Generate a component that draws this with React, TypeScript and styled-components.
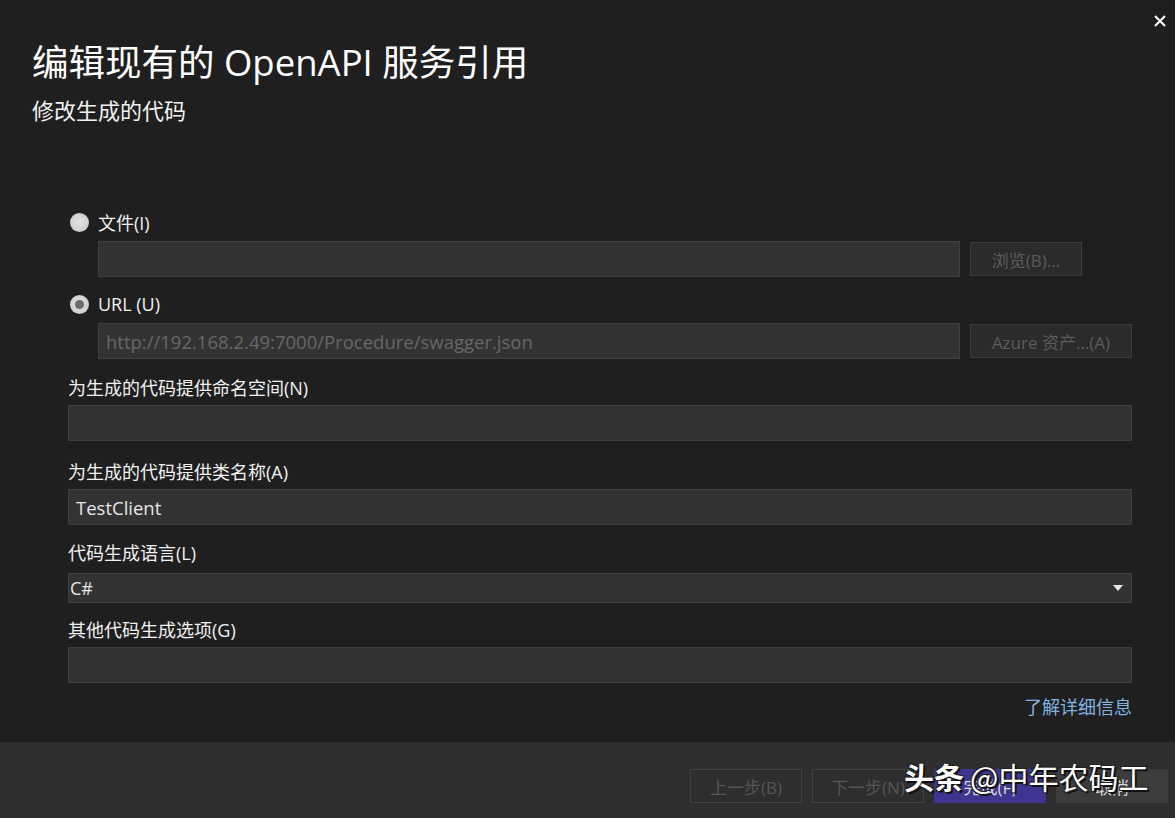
import React from 'react';
import styled, { createGlobalStyle } from 'styled-components';

const GlobalStyle = createGlobalStyle`
  html, body {
    margin: 0;
    padding: 0;
    background: #1f1f1f;
  }
  body {
    font-family: "Open Sans", "Noto Sans CJK SC", sans-serif;
    color: #f1f1f1;
  }
  * {
    box-sizing: border-box;
  }
`;

const Dialog = styled.div`
  position: relative;
  width: 1175px;
  height: 818px;
  display: flex;
  flex-direction: column;
  background: #1f1f1f;
  overflow: hidden;
`;

const Header = styled.div`
  display: flex;
  justify-content: space-between;
  align-items: flex-start;
  padding: 40px 0 0 32px;
`;

const Heading = styled.div`
  display: flex;
  flex-direction: column;
`;

const Title = styled.h1`
  margin: 0;
  font-size: 36.5px;
  line-height: 44px;
  font-weight: 400;
  color: #ffffff;
`;

const Subtitle = styled.h2`
  margin: 12px 0 0;
  font-size: 22px;
  line-height: 28px;
  font-weight: 400;
  color: #f1f1f1;
`;

const CloseButton = styled.button`
  margin-top: -30px;
  width: 22px;
  height: 22px;
  padding: 0;
  border: none;
  background: transparent;
  color: #ffffff;
  display: flex;
  align-items: center;
  justify-content: flex-start;
`;

const Body = styled.div`
  flex: 1;
  display: flex;
  flex-direction: column;
  padding: 84px 43px 0 68px;
`;

const RadioRow = styled.label<{ $gap: number }>`
  display: flex;
  align-items: center;
  gap: 9px;
  height: 28px;
  margin-top: ${p => p.$gap}px;
  padding-left: 2px;
  font-size: 18px;
  color: #f1f1f1;
`;

const RadioDot = styled.span<{ $checked?: boolean }>`
  width: 19px;
  height: 19px;
  border-radius: 50%;
  background: radial-gradient(circle at 50% 45%, #e2e2e2 0%, #cfcfcf 70%, #a9a9a9 100%);
  display: flex;
  align-items: center;
  justify-content: center;
  &::after {
    content: '';
    display: ${p => (p.$checked ? 'block' : 'none')};
    width: 9px;
    height: 9px;
    border-radius: 50%;
    background: #6b6b6b;
  }
`;

const SourceRow = styled.div`
  display: grid;
  grid-template-columns: 862px auto;
  justify-content: start;
  gap: 10px;
  margin-top: 5px;
  padding-left: 30px;
`;

const TextBox = styled.div<{ $muted?: boolean }>`
  height: 36px;
  min-width: 0;
  background: #333333;
  border: 1px solid #3f3f3f;
  display: flex;
  align-items: center;
  padding: 0 7px;
  font-size: 18.5px;
  color: ${p => (p.$muted ? '#676767' : '#e6e6e6')};
  white-space: nowrap;
  overflow: hidden;
`;

const SideButton = styled.button<{ $width: number }>`
  width: ${p => p.$width}px;
  height: 34px;
  margin-top: 1px;
  background: #2b2b2b;
  border: 1px solid #3b3b3b;
  color: #5c5c5c;
  font-family: inherit;
  font-size: 17px;
  padding: 0;
`;

const Field = styled.div<{ $gap: number }>`
  display: flex;
  flex-direction: column;
  margin-top: ${p => p.$gap}px;
`;

const Label = styled.div`
  height: 28px;
  line-height: 28px;
  margin-bottom: 3px;
  font-size: 18px;
  color: #f1f1f1;
`;

const Select = styled.div`
  height: 30px;
  margin-top: 3px;
  background: #333333;
  border: 1px solid #3f3f3f;
  display: flex;
  align-items: center;
  justify-content: space-between;
  padding: 0 8px 0 1px;
  font-size: 18px;
  color: #e6e6e6;
`;

const LinkRow = styled.div`
  display: flex;
  justify-content: flex-end;
  margin-top: 12px;
`;

const Link = styled.a`
  font-size: 18px;
  line-height: 24px;
  color: #83b3e0;
  text-decoration: none;
`;

const Footer = styled.div`
  height: 76px;
  background: #2e2e2e;
  border-top: 1px solid #272727;
  display: flex;
  justify-content: flex-end;
  padding: 26px 7px 0 0;
  gap: 10px;
`;

const FooterButton = styled.button<{ $primary?: boolean; $enabled?: boolean }>`
  width: 112px;
  height: 34px;
  padding: 0;
  font-family: inherit;
  font-size: 17px;
  background: ${p => (p.$primary ? '#3f3591' : p.$enabled ? '#3c3c3c' : '#2e2e2e')};
  border: 1px solid ${p => (p.$primary ? '#3f3591' : p.$enabled ? '#3c3c3c' : '#414141')};
  color: ${p => (p.$primary || p.$enabled ? '#d8d8d8' : '#555555')};
`;

const Watermark = styled.div`
  position: absolute;
  left: 904px;
  top: 756px;
  font-family: "Noto Sans CJK SC", sans-serif;
  font-size: 30px;
  line-height: 40px;
  color: #ffffff;
  white-space: nowrap;
  text-shadow: 2px 2px 0 #111, -1px -1px 0 #222, 1px -1px 0 #222, -1px 1px 0 #222;
  pointer-events: none;
`;

const Strong = styled.span`
  font-weight: 700;
  margin-right: 6px;
`;

const CloseIcon = () => (
  <svg width="14" height="14" viewBox="0 0 14 14">
    <path d="M2 2 L12 12 M12 2 L2 12" stroke="#ffffff" strokeWidth="2" />
  </svg>
);

const DropArrow = () => (
  <svg width="10" height="6" viewBox="0 0 10 6">
    <path d="M0 0 H10 L5 6 Z" fill="#e6e6e6" />
  </svg>
);

export default function App() {
  return (
    <>
      <GlobalStyle />
      <Dialog>
        <Header>
          <Heading>
            <Title>编辑现有的 OpenAPI 服务引用</Title>
            <Subtitle>修改生成的代码</Subtitle>
          </Heading>
          <CloseButton aria-label="关闭">
            <CloseIcon />
          </CloseButton>
        </Header>

        <Body>
          <RadioRow $gap={0}>
            <RadioDot />
            文件(I)
          </RadioRow>
          <SourceRow>
            <TextBox />
            <SideButton $width={112}>浏览(B)...</SideButton>
          </SourceRow>

          <RadioRow $gap={13}>
            <RadioDot $checked />
            URL (U)
          </RadioRow>
          <SourceRow>
            <TextBox $muted>http://192.168.2.49:7000/Procedure/swagger.json</TextBox>
            <SideButton $width={162}>Azure 资产...(A)</SideButton>
          </SourceRow>

          <Field $gap={15}>
            <Label>为生成的代码提供命名空间(N)</Label>
            <TextBox />
          </Field>

          <Field $gap={17}>
            <Label>为生成的代码提供类名称(A)</Label>
            <TextBox>TestClient</TextBox>
          </Field>

          <Field $gap={14}>
            <Label>代码生成语言(L)</Label>
            <Select>
              C#
              <DropArrow />
            </Select>
          </Field>

          <Field $gap={13}>
            <Label>其他代码生成选项(G)</Label>
            <TextBox />
          </Field>

          <LinkRow>
            <Link href="#">了解详细信息</Link>
          </LinkRow>
        </Body>

        <Footer>
          <FooterButton>上一步(B)</FooterButton>
          <FooterButton>下一步(N)</FooterButton>
          <FooterButton $primary>完成(F)</FooterButton>
          <FooterButton $enabled>取消</FooterButton>
        </Footer>

        <Watermark>
          <Strong>头条</Strong>@中年农码工
        </Watermark>
      </Dialog>
    </>
  );
}
